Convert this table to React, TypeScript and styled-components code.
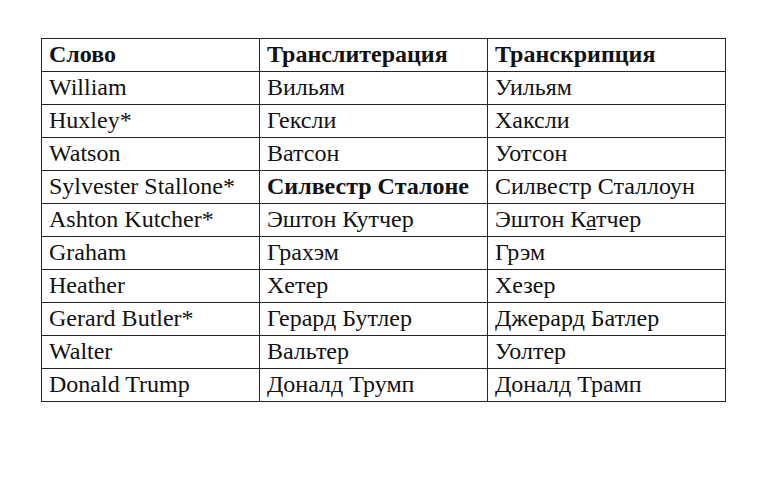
import { FC } from "react";
import styled, { createGlobalStyle } from "styled-components";

type Row = {
    word: string;
    translit: string;
    transcr: React.ReactNode;
    boldTranslit?: boolean;
};

const rows: Row[] = [
    { word: "William", translit: "Вильям", transcr: "Уильям" },
    { word: "Huxley*", translit: "Гексли", transcr: "Хаксли" },
    { word: "Watson", translit: "Ватсон", transcr: "Уотсон" },
    { word: "Sylvester Stallone*", translit: "Силвестр Сталоне", transcr: "Силвестр Сталлоун", boldTranslit: true },
    { word: "Ashton Kutcher*", translit: "Эштон Кутчер", transcr: <>Эштон К<u>а</u>тчер</> },
    { word: "Graham", translit: "Грахэм", transcr: "Грэм" },
    { word: "Heather", translit: "Хетер", transcr: "Хезер" },
    { word: "Gerard Butler*", translit: "Герард Бутлер", transcr: "Джерард Батлер" },
    { word: "Walter", translit: "Вальтер", transcr: "Уолтер" },
    { word: "Donald Trump", translit: "Доналд Трумп", transcr: "Доналд Трамп" },
];

const GlobalStyle = createGlobalStyle`
  html, body {
    margin: 0;
    padding: 0;
    background: #ffffff;
    font-family: "Liberation Serif", "Times New Roman", serif;
  }
`;

const Page = styled.div`
width: 783px;
height: 478px;
padding: 38px 0 0 41px;
box-sizing: border-box;
`;

const Table = styled.table`
border-collapse: collapse;
table-layout: fixed;
width: 684px;
border: 1.5px solid #1c1c1c;
`;

const Cell = styled.td<{ $bold?: boolean }>`
font-family: "Liberation Serif", "Times New Roman", serif;
font-size: 24px;
color: #111111;
border: 1px solid #262626;
height: 24px;
line-height: 24px;
padding: 3px 6px 5px 7px;
white-space: nowrap;
overflow: hidden;
font-weight: ${({ $bold }) => ($bold ? 700 : 400)};

& u {
    text-decoration-thickness: 1px;
    text-underline-offset: 2px;
}
`;

const App: FC = () => {
    return (
        <>
            <GlobalStyle />
            <Page>
                <Table>
                    <colgroup>
                        <col style={{ width: 218 }} />
                        <col style={{ width: 228 }} />
                        <col style={{ width: 238 }} />
                    </colgroup>
                    <tbody>
                        <tr>
                            <Cell $bold>Слово</Cell>
                            <Cell $bold>Транслитерация</Cell>
                            <Cell $bold>Транскрипция</Cell>
                        </tr>
                        {rows.map((r, i) => (
                            <tr key={i}>
                                <Cell>{r.word}</Cell>
                                <Cell $bold={r.boldTranslit}>{r.translit}</Cell>
                                <Cell>{r.transcr}</Cell>
                            </tr>
                        ))}
                    </tbody>
                </Table>
            </Page>
        </>
    );
};

export default App;
